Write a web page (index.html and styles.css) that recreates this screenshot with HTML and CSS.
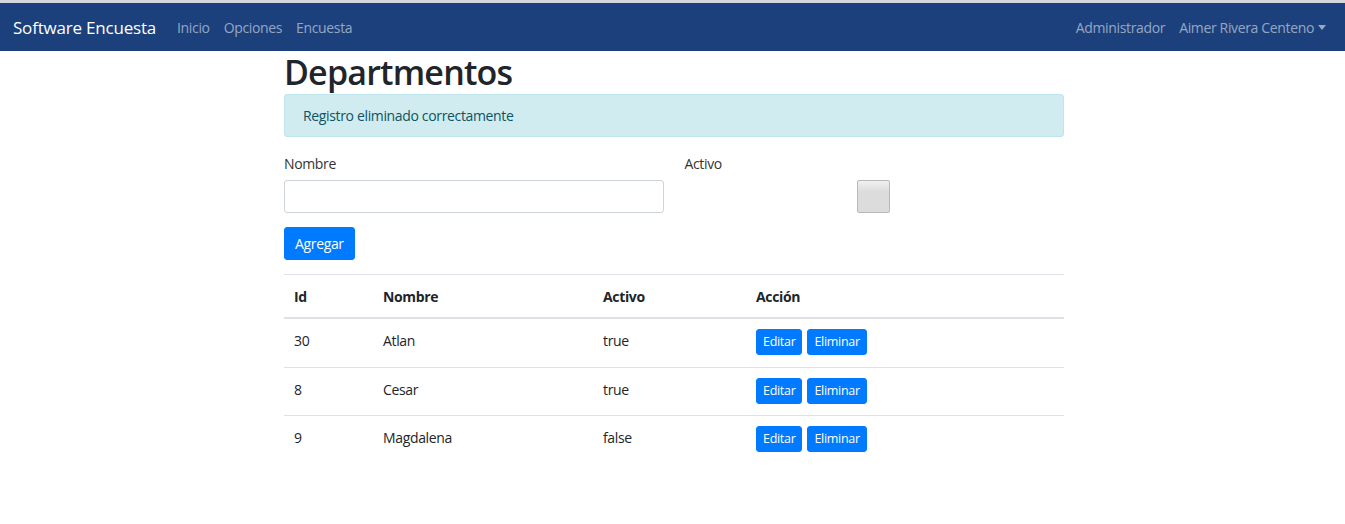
FILE: index.html
```html
<!DOCTYPE html>
<html lang="es">
<head>
<meta charset="utf-8">
<title>Departmentos</title>
<link rel="stylesheet" href="styles.css">
</head>
<body>
<nav class="navbar">
  <a class="brand" href="#">Software Encuesta</a>
  <ul class="nav-links">
    <li><a href="#">Inicio</a></li>
    <li><a href="#">Opciones</a></li>
    <li><a href="#">Encuesta</a></li>
  </ul>
  <ul class="nav-links nav-right">
    <li><a href="#">Administrador</a></li>
    <li><a href="#" class="dropdown">Aimer Rivera Centeno<span class="caret"></span></a></li>
  </ul>
</nav>
<main class="container">
  <h1 class="title">Departmentos</h1>
  <div class="alert">Registro eliminado correctamente</div>
  <form class="form">
    <div class="form-row">
      <div class="field">
        <label class="label" for="nombre">Nombre</label>
        <input class="input" id="nombre" type="text">
      </div>
      <div class="field">
        <label class="label" for="activo">Activo</label>
        <div class="check-wrap"><span class="check" id="activo"></span></div>
      </div>
    </div>
    <button type="button" class="btn btn-add">Agregar</button>
  </form>
  <table class="table">
    <thead>
      <tr><th class="c-id">Id</th><th class="c-name">Nombre</th><th class="c-act">Activo</th><th>Acción</th></tr>
    </thead>
    <tbody>
      <tr><td>30</td><td>Atlan</td><td>true</td><td><button class="btn btn-sm">Editar</button><button class="btn btn-sm">Eliminar</button></td></tr>
      <tr><td>8</td><td>Cesar</td><td>true</td><td><button class="btn btn-sm">Editar</button><button class="btn btn-sm">Eliminar</button></td></tr>
      <tr><td>9</td><td>Magdalena</td><td>false</td><td><button class="btn btn-sm">Editar</button><button class="btn btn-sm">Eliminar</button></td></tr>
    </tbody>
  </table>
</main>
</body>
</html>
```
FILE: styles.css
```css
* { box-sizing: border-box; }
html, body { margin: 0; padding: 0; background: #fff; }
body {
  font-family: "Open Sans", "Noto Sans", "Liberation Sans", sans-serif;
  font-size: 14px;
  line-height: 21px;
  letter-spacing: -0.35px;
  color: #212529;
}
a { text-decoration: none; }

.navbar {
  display: flex;
  align-items: center;
  height: 51px;
  border-top: 3px solid #d5d9df;
  background: #1b407c;
  padding: 0 19px 0 13px;
}
.brand {
  color: #fff;
  font-size: 17px;
  letter-spacing: -0.2px;
  margin-right: 21px;
}
.nav-links {
  display: flex;
  gap: 14px;
  list-style: none;
  margin: 0;
  padding: 0;
}
.nav-links a {
  color: rgba(255, 255, 255, 0.55);
  font-size: 14px;
}
.nav-right { margin-left: auto; }
.caret {
  display: inline-block;
  margin-left: 4px;
  vertical-align: 3px;
  border-top: 5px solid rgba(255, 255, 255, 0.55);
  border-left: 4px solid transparent;
  border-right: 4px solid transparent;
}

.container {
  width: 783px;
  margin: 0 auto;
  padding-left: 3px;
}
.title {
  margin: 0 0 1px;
  font-size: 34px;
  line-height: 42px;
  letter-spacing: -0.8px;
  font-weight: 600;
  color: #212529;
}
.alert {
  background: #d1ecf1;
  border: 1px solid #bee5eb;
  color: #0c5460;
  border-radius: 3px;
  padding: 10px 18px;
  margin-bottom: 16px;
}
.form-row {
  display: flex;
  gap: 21px;
}
.field { flex: 1; }
.label {
  display: block;
  margin-bottom: 6px;
  color: #333;
}
.input {
  display: block;
  width: 100%;
  height: 33px;
  border: 1px solid #ced4da;
  border-radius: 3px;
  background: #fff;
  font: inherit;
}
.check-wrap {
  display: flex;
  justify-content: center;
}
.check {
  display: block;
  width: 33px;
  height: 33px;
  margin-left: -2px;
  border: 1px solid #b9b9b9;
  border-radius: 2px;
  background: linear-gradient(#f0f0f0, #dcdcdc 35%, #dcdcdc);
}
.btn {
  font: inherit;
  letter-spacing: inherit;
  color: #fff;
  background: #007bff;
  border: 1px solid #007bff;
  border-radius: 3px;
  cursor: pointer;
}
.btn-add {
  margin-top: 14px;
  height: 33px;
  padding: 0 10px;
}
.table {
  width: 780px;
  margin-top: 14px;
  border-collapse: collapse;
}
.table th, .table td {
  text-align: left;
  vertical-align: top;
  padding: 11px 10px 11.5px;
  border-top: 1px solid #dee2e6;
}
.table th {
  font-weight: 700;
  padding: 11px 10px 10px;
  border-bottom: 2px solid #dee2e6;
}
.c-id { width: 89px; }
.c-name { width: 220px; }
.c-act { width: 153px; }
.btn-sm {
  height: 26px;
  padding: 0 6px;
  font-size: 12.5px;
  line-height: 24px;
  letter-spacing: -0.3px;
  margin: -1px 5px 0 0;
  vertical-align: top;
}
```
